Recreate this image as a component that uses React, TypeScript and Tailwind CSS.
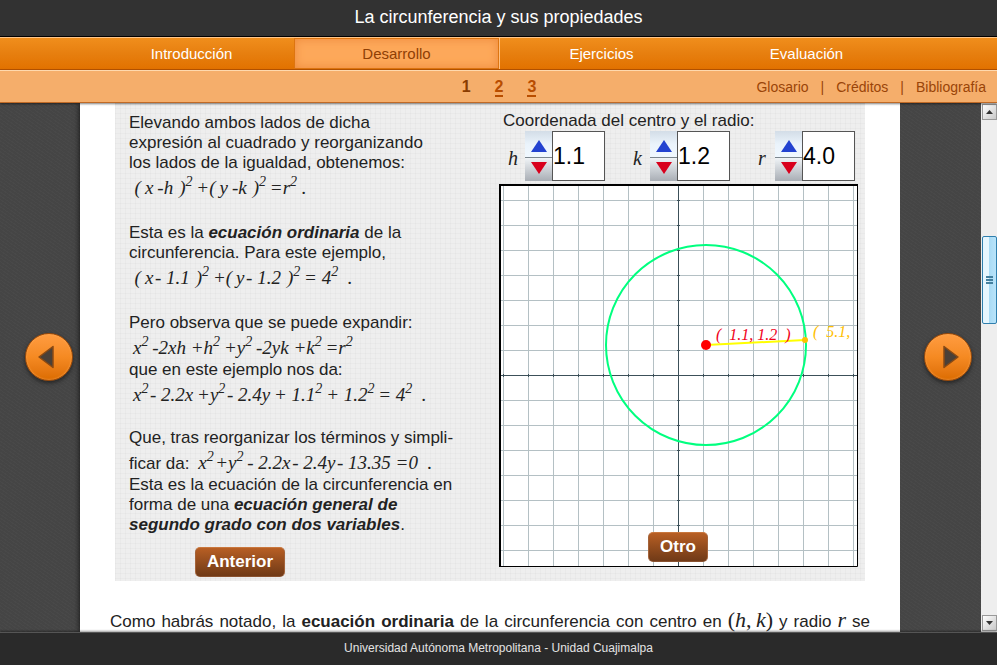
import type { ReactNode } from "react";

const SANS = "font-['Liberation_Sans',Arial,sans-serif]";
const SERIF = "font-['Liberation_Serif','Times_New_Roman',serif]";

const tabs = ["Introducción", "Desarrollo", "Ejercicios", "Evaluación"];

function Sup({ children = "2" }: { children?: ReactNode }) {
  return <sup className="top-0 align-[8px] text-[14px] leading-0">{children}</sup>;
}

function T({ children }: { children: ReactNode }) {
  return <span className="ml-1">{children}</span>;
}

function Formula({ children }: { children: ReactNode }) {
  return (
    <span className={`${SERIF} whitespace-pre pl-1 text-[19px] italic leading-[25px]`}>
      {children}
    </span>
  );
}

function FormulaRow({ children }: { children: ReactNode }) {
  return <p className="h-[27px] pt-0.5 leading-[25px]">{children}</p>;
}

function Spinner({ name, value }: { name: string; value: string }) {
  return (
    <div className="flex items-center">
      <label htmlFor={name} className={`${SERIF} w-[17px] pt-1 text-[20px] italic text-[#222]`}>
        {name}
      </label>
      <div className="flex h-[50px] w-[27px] flex-col">
        <button
          aria-label={`Aumentar ${name}`}
          className="flex flex-1 items-center justify-center border-b border-[#7b868e] bg-linear-to-b from-[#d3dde7] via-[#eaf3fb] to-[#f0f8ff] pt-1"
        >
          <svg width="16" height="12" viewBox="0 0 16 12"><path d="M8 0L16 12H0z" fill="#2242d0" /></svg>
        </button>
        <button
          aria-label={`Disminuir ${name}`}
          className="flex flex-1 items-center justify-center bg-linear-to-b from-[#f0f4f7] to-[#a9aeb5] pb-0.5"
        >
          <svg width="16" height="12" viewBox="0 0 16 12"><path d="M8 12L16 0H0z" fill="#d8001c" /></svg>
        </button>
      </div>
      <input
        id={name}
        defaultValue={value}
        className="h-[50px] w-[53px] border border-[#555] bg-white text-[23px] text-black outline-none"
      />
    </div>
  );
}

function Plot() {
  const xs = Array.from({ length: 15 }, (_, i) => 4.5 + i * 25);
  const ys = Array.from({ length: 15 }, (_, i) => 16.5 + i * 25);
  return (
    <svg width="359" height="383" viewBox="0 0 359 383" className="block bg-white">
      {xs.map((x) => <path key={x} d={`M${x} 0V383`} stroke="#b4c0c4" />)}
      {ys.map((y) => <path key={y} d={`M0 ${y}H359`} stroke="#b4c0c4" />)}
      <path d="M179.5 0V383M0 191.5H359" stroke="#3c5059" />
      {xs.map((x) => <path key={x} d={`M${x} 190V193`} stroke="#3c5059" />)}
      {ys.map((y) => <path key={y} d={`M178 ${y}H181`} stroke="#3c5059" />)}
      <circle cx="207" cy="161" r="100" fill="none" stroke="#00ff7f" strokeWidth="2" />
      <path d="M207 161L306 156" stroke="#ff0" strokeWidth="2" />
      <circle cx="207" cy="161" r="5" fill="#f00" />
      <circle cx="306" cy="156" r="3" fill="#ffc000" />
      <g fontFamily="'Liberation Serif', serif" fontStyle="italic" fontSize="16">
        <text x="217" y="156" fill="#f00018">{"(\u00a0 1.1, 1.2 \u00a0)"}</text>
        <text x="314" y="153" fill="#ffc000">{"(\u00a0 5.1,"}</text>
      </g>
      <path d="M1 383V1H359" fill="none" stroke="#000" strokeWidth="2" />
      <path d="M358.5 0V382.5H0" fill="none" stroke="#000" />
    </svg>
  );
}

function BrownButton({ children, width }: { children: ReactNode; width: string }) {
  return (
    <button
      className={`${width} block h-[30px] rounded-[5px] border border-t-[#c9773d] border-x-[#a4633a] border-b-[#8a5230] bg-linear-to-b from-[#b85f24] to-[#703a17] text-[17px] font-bold leading-[28px] text-white`}
    >
      {children}
    </button>
  );
}

function RoundButton({ label, path }: { label: string; path: string }) {
  return (
    <button
      aria-label={label}
      className="flex size-12 items-center justify-center rounded-full border border-[#9c4a08] bg-linear-to-b from-[#ff9c40] via-[#f58a22] to-[#dc6c00] shadow-[0_2px_4px_rgba(0,0,0,0.5),inset_0_0_2px_#ffb060]"
    >
      <svg width="46" height="46" viewBox="0 0 46 46">
        <path d={path} fill="#4a4038" stroke="#8a4a14" strokeWidth="1.5" strokeLinejoin="round" />
      </svg>
    </button>
  );
}

function ScrollArrow({ label, path }: { label: string; path: string }) {
  return (
    <button
      aria-label={label}
      className="flex h-4 w-[15px] items-center justify-center border border-[#999] bg-linear-to-br from-white to-[#c8c8c8]"
    >
      <svg width="7" height="4" viewBox="0 0 7 4"><path d={path} fill="#333" /></svg>
    </button>
  );
}

export default function App() {
  return (
    <div className={`${SANS} flex h-screen flex-col overflow-hidden bg-[#444]`}>
      <header className="flex h-[37px] shrink-0 items-center justify-center border-b border-black bg-[#323232] pb-0.5">
        <h1 className="text-[18px] leading-6 text-white">La circunferencia y sus propiedades</h1>
      </header>

      <nav className="grid h-[33px] shrink-0 grid-cols-4 border-t border-b border-t-[#ffc68a] border-b-[#b85300] bg-linear-to-b from-[#f08e1c] via-[#e77f0f] to-[#e27200] pr-[88px] pl-[89px] text-[15px]">
        {tabs.map((tab) => (
          <a
            key={tab}
            href="#"
            className={
              tab === "Desarrollo"
                ? "flex items-center justify-center border border-[#dd7510] bg-[#fda85a] pt-0.5 text-[#8f3f05] shadow-[inset_0_0_10px_#ee8a3c,1px_0_0_#ffc080]"
                : "flex items-center justify-center pt-0.5 text-white"
            }
          >
            {tab}
          </a>
        ))}
      </nav>

      <div className="relative z-10 grid h-[33px] shrink-0 grid-cols-[1fr_auto_1fr] items-center border-t border-b border-t-[#ffd9ae] border-b-[#c06a26] bg-[#f5ae6b] pt-0.5 pr-[11px] pl-3 shadow-[0_1px_2px_rgba(0,0,0,0.5)]">
        <div />
        <div className="flex gap-6 text-[16px] leading-4 font-bold text-[#b84d00]">
          <span className="border-b-2 border-transparent text-[#8a3c00]">1</span>
          <a href="#" className="border-b-2 border-[#b84d00]">2</a>
          <a href="#" className="border-b-2 border-[#b84d00]">3</a>
        </div>
        <div className="flex justify-end gap-3 text-[14px] text-[#9a4408]">
          <a href="#">Glosario</a>
          <span>|</span>
          <a href="#">Créditos</a>
          <span>|</span>
          <a href="#">Bibliografía</a>
        </div>
      </div>

      <div className="flex min-h-0 flex-1">
        <aside className="flex w-20 shrink-0 items-start justify-end bg-[#454545] bg-[repeating-linear-gradient(35deg,rgba(255,255,255,0.02)_0_1px,transparent_1px_3px)] pt-[230px] pr-[7px]">
          <RoundButton label="Página anterior" path="M13 23L27 12.500V33.500z" />
        </aside>

        <main className="min-w-0 flex-1 overflow-hidden bg-white shadow-[0_0_6px_rgba(0,0,0,0.8)]">
          <section className="mx-[35px] flex h-[478px] justify-between bg-[#eee] bg-[linear-gradient(90deg,rgba(0,0,0,0.02)_1px,transparent_1px),linear-gradient(rgba(0,0,0,0.02)_1px,transparent_1px)] bg-[size:5px_5px] pr-[7px] pl-3.5 text-[17px] leading-5 text-[#222]">
            <div className="w-[340px] pt-2.5">
              <p>Elevando ambos lados de dicha<br />expresión al cuadrado y reorganizando<br />los lados de la igualdad, obtenemos:</p>
              <FormulaRow>
                <Formula>
                  {"\u200a("}<T>x</T><T>-h</T><span className="ml-1.5">)</span><Sup />
                  {"\u2009+("}<T>y</T><T>-k</T><span className="ml-1.5">)</span><Sup />
                  {"\u2009=r"}<Sup />{" ."}
                </Formula>
              </FormulaRow>
              <p className="mt-[23px]">Esta es la <b><i>ecuación ordinaria</i></b> de la<br />circunferencia. Para este ejemplo,</p>
              <FormulaRow>
                <Formula>
                  {"\u200a("}<T>x</T>{"\u200a- 1.1"}<span className="ml-1.5">)</span><Sup />
                  {"\u2009+("}<T>y</T>{"\u200a- 1.2"}<span className="ml-1.5">)</span><Sup />
                  {"\u2009= 4"}<Sup />{"  ."}
                </Formula>
              </FormulaRow>
              <p className="mt-[23px]">Pero observa que se puede expandir:</p>
              <FormulaRow>
                <Formula>x<Sup />{"\u2009-2xh +h"}<Sup />{"\u2009+y"}<Sup />{"\u2009-2yk +k"}<Sup />{"\u2009=r"}<Sup /></Formula>
              </FormulaRow>
              <p>que en este ejemplo nos da:</p>
              <FormulaRow>
                <Formula>x<Sup />{"\u200a- 2.2x\u2009+y"}<Sup />{"\u200a- 2.4y\u2009+ 1.1"}<Sup />{"\u2009+ 1.2"}<Sup />{"\u2009= 4"}<Sup />{"  ."}</Formula>
              </FormulaRow>
              <p className="mt-[21px]">Que, tras reorganizar los términos y simpli-</p>
              <FormulaRow>
                ficar da: <Formula>x<Sup />{"\u200a+y"}<Sup />{"\u2009- 2.2x\u200a- 2.4y\u200a- 13.35 =0  ."}</Formula>
              </FormulaRow>
              <p>
                Esta es la ecuación de la circunferencia en<br />forma de una <b><i>ecuación general de<br />segundo grado con dos variables</i></b>.
              </p>
              <div className="mt-3 ml-[66px]"><BrownButton width="w-[90px]">Anterior</BrownButton></div>
            </div>

            <div className="w-[359px] pt-2">
              <p className="pl-1">Coordenada del centro y el radio:</p>
              <div className="mb-[3px] flex justify-between pr-[3px] pl-[9px]">
                <Spinner name="h" value="1.1" />
                <Spinner name="k" value="1.2" />
                <Spinner name="r" value="4.0" />
              </div>
              <div className="relative">
                <Plot />
                <div className="absolute inset-x-0 bottom-[5px] flex justify-center pr-px">
                  <BrownButton width="w-[60px]">Otro</BrownButton>
                </div>
              </div>
            </div>
          </section>

          <p className="mx-[30px] mt-[29px] h-6 text-justify text-[17px] leading-6 text-[#222] [text-align-last:justify]">
            Como habrás notado, la <b>ecuación ordinaria</b> de la circunferencia con centro en{" "}
            <span className={`${SERIF} text-[22px] leading-0 whitespace-nowrap`}>(<i>h</i>,&thinsp;<i>k</i>)</span> y radio{" "}
            <i className={`${SERIF} text-[22px] leading-0`}>r</i> se
          </p>
        </main>

        <aside className="flex w-[81px] shrink-0 items-start bg-[#454545] bg-[repeating-linear-gradient(35deg,rgba(255,255,255,0.02)_0_1px,transparent_1px_3px)] pt-[230px] pl-6">
          <RoundButton label="Página siguiente" path="M33 23L19 12.500V33.500z" />
        </aside>

        <div className="flex w-4 shrink-0 flex-col items-end justify-between bg-[#eee] py-px">
          <ScrollArrow label="Subir" path="M3.500 0L7 4H0z" />
          <div className="mb-[176px] flex h-[88px] w-[15px] flex-col items-center justify-center gap-px rounded-xs border border-[#2f7fae] bg-linear-to-r from-[#e6f6fe] from-45% via-[#a9dbf5] via-50% to-[#b9e4fa]">
            <span className="h-0.5 w-[7px] bg-[#44809f]" />
            <span className="h-0.5 w-[7px] bg-[#44809f]" />
            <span className="h-0.5 w-[7px] bg-[#44809f]" />
          </div>
          <ScrollArrow label="Bajar" path="M3.500 4L7 0H0z" />
        </div>
      </div>

      <footer className="relative z-10 flex h-[33px] shrink-0 items-center justify-center border-t border-[#555] bg-[#2a2a2a] pb-0.5 text-[12px] text-[#e4e4e4] shadow-[0_-1px_2px_rgba(0,0,0,0.4)]">
        Universidad Autónoma Metropolitana - Unidad Cuajimalpa
      </footer>
    </div>
  );
}
